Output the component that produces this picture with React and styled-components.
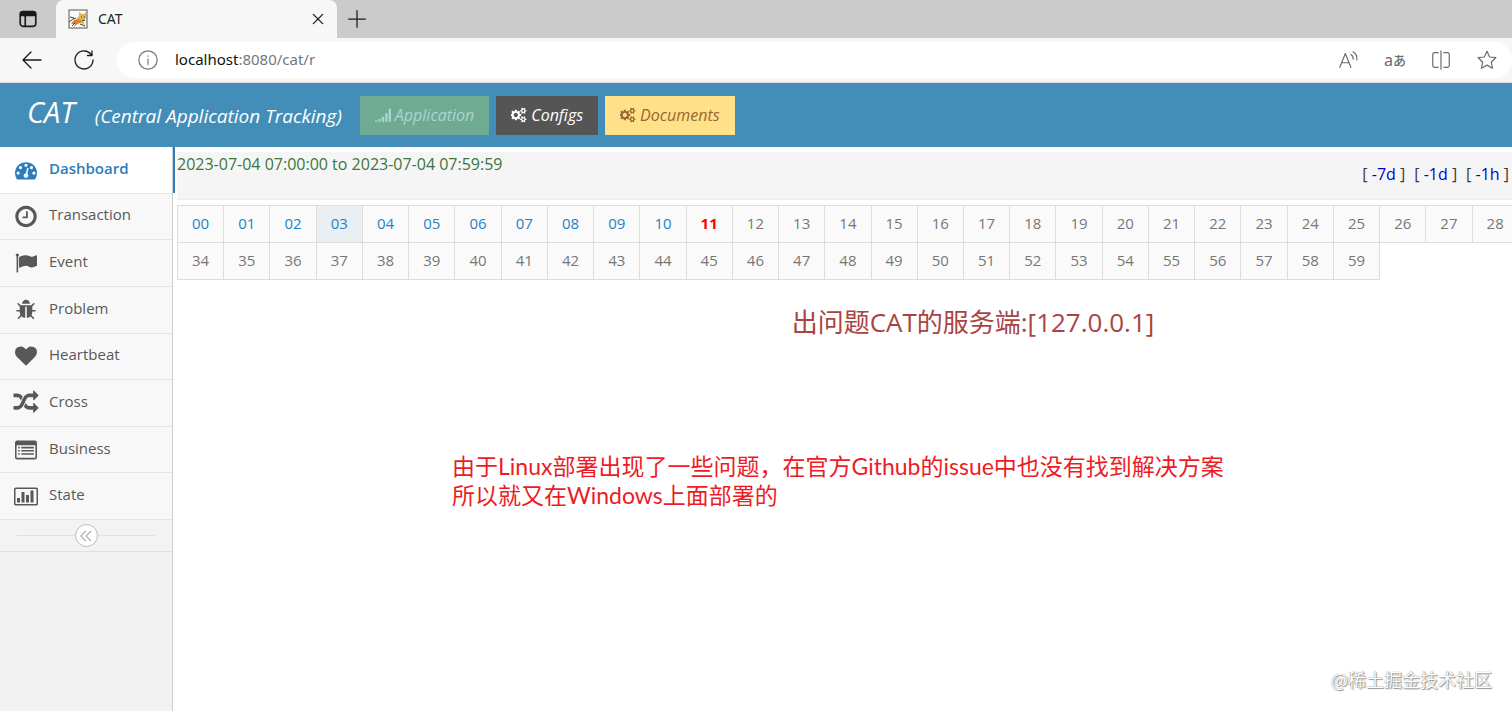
import React from 'react';
import styled, { createGlobalStyle } from 'styled-components';

const GlobalStyle = createGlobalStyle`
  * {
    box-sizing: border-box;
  }
  body {
    margin: 0;
    overflow: hidden;
    background: #ffffff;
    font-family: 'Open Sans', 'Noto Sans CJK SC', sans-serif;
    font-size: 16px;
    color: #393939;
  }
  button {
    font-family: inherit;
    border: 0;
    padding: 0;
    background: none;
    cursor: pointer;
  }
  a {
    text-decoration: none;
  }
`;

const Page = styled.div`
  display: flex;
  flex-direction: column;
  min-height: 100vh;
`;

/* browser window */

const TabStrip = styled.div`
  display: flex;
  align-items: stretch;
  height: 38px;
  background: #cbcbcb;
`;

const StripButton = styled.button`
  display: flex;
  align-items: center;
  justify-content: center;
  width: ${({ $width }) => $width}px;
  color: #1a1a1a;
`;

const Tab = styled.div`
  display: flex;
  align-items: center;
  width: 281px;
  padding: 0 8px 0 12px;
  gap: 10px;
  background: #f7f7f7;
  border-radius: 8px 8px 0 0;
  font-family: 'Noto Sans', sans-serif;
  font-size: 14px;
  line-height: 20px;
  color: #1f1f1f;
`;

const TabTitle = styled.span`
  flex: 1;
`;

const CloseButton = styled.button`
  display: flex;
  padding: 4px;
  color: #1a1a1a;
`;

const Toolbar = styled.div`
  display: flex;
  align-items: center;
  height: 45px;
  padding-left: 20px;
  background: #f7f7f7;
  border-bottom: 1px solid #dcdcdc;
`;

const NavButton = styled.button`
  display: flex;
  width: 24px;
  margin-right: 28px;
  color: #1a1a1a;
`;

const AddressBar = styled.div`
  flex: 1;
  display: flex;
  align-items: center;
  height: 36px;
  margin-left: -7px;
  padding: 0 13px 0 20px;
  gap: 16px;
  border-radius: 18px;
  background: #ffffff;
  color: #767676;
`;

const Url = styled.div`
  flex: 1;
  padding-bottom: 2px;
  font-family: 'Noto Sans', sans-serif;
  font-size: 15px;
  line-height: 24px;
  color: #767676;

  b {
    font-weight: 400;
    color: #111111;
  }
`;

const AddressTools = styled.div`
  display: flex;
  align-items: center;
  gap: 22px;
`;

const ToolButton = styled.button`
  display: flex;
  align-items: center;
  justify-content: center;
  width: 24px;
  height: 24px;
  font-family: 'Noto Sans', 'Noto Sans CJK JP', sans-serif;
  font-size: 16px;
  line-height: 20px;
  color: #6b6b6b;

  small {
    font-size: 13px;
    font-weight: 500;
  }
`;

/* application */

const Navbar = styled.header`
  display: flex;
  align-items: center;
  height: 64px;
  padding-left: 27px;
  background: #438eb9;
  font-style: italic;
  color: #ffffff;
`;

const Brand = styled.div`
  display: flex;
  align-items: baseline;
  gap: 20px;
  margin-right: 18px;
  padding-bottom: 2px;
  font-size: 29px;
  line-height: 36px;
  white-space: nowrap;

  small {
    font-size: 19px;
  }
`;

const NavActions = styled.div`
  display: flex;
  gap: 7px;
`;

const actionColors = {
  success: { bg: '#6eab92', text: '#a9d5d3' },
  dark: { bg: '#555555', text: '#ffffff' },
  yellow: { bg: '#fee188', text: '#996633' },
};

const ActionButton = styled.button`
  display: flex;
  align-items: center;
  gap: 4px;
  height: 39px;
  padding: 0 15px;
  font-size: 16px;
  font-style: italic;
  background: ${({ $tone }) => actionColors[$tone].bg};
  color: ${({ $tone }) => actionColors[$tone].text};
`;

const Body = styled.div`
  flex: 1;
  display: flex;
`;

const Sidebar = styled.aside`
  flex: none;
  width: 173px;
  background: #f2f2f2;
  border-right: 1px solid #cccccc;
`;

const Menu = styled.nav`
  display: grid;
  grid-auto-rows: 1fr;
  height: 373px;
`;

const MenuItem = styled.a`
  position: relative;
  display: flex;
  align-items: center;
  gap: 10px;
  padding-left: 13px;
  border-bottom: 1px solid #e5e5e5;
  background: ${({ $active }) => ($active ? '#ffffff' : '#f8f8f8')};
  color: ${({ $active }) => ($active ? '#2b7dbc' : '#585858')};
  font-weight: ${({ $active }) => ($active ? 600 : 400)};
  font-size: 15px;

  &::after {
    content: '';
    display: ${({ $active }) => ($active ? 'block' : 'none')};
    position: absolute;
    top: 0;
    bottom: 0;
    right: -3px;
    width: 2px;
    background: #2b7dbc;
  }
`;

const MenuLabel = styled.span`
  padding-bottom: 4px;
`;

const Collapse = styled.div`
  display: flex;
  align-items: center;
  height: 32px;
  padding: 0 17px;
  background: #f3f3f3;
  border-bottom: 1px solid #e0e0e0;

  &::before,
  &::after {
    content: '';
    flex: 1;
    border-top: 1px solid #e0e0e0;
  }
`;

const CollapseButton = styled.button`
  display: flex;
  align-items: center;
  justify-content: center;
  width: 23px;
  height: 23px;
  border: 1px solid #bbbbbb;
  border-radius: 50%;
  background: #ffffff;
  color: #999999;
`;

const Main = styled.main`
  flex: 1;
  min-width: 0;
  overflow: hidden;
  padding: 5px 0 0 4px;
`;

const Period = styled.div`
  display: flex;
  justify-content: space-between;
  height: 48px;
  padding-right: 3px;
  background: #f5f5f5;
  border-bottom: 1px solid #eeeeee;
  line-height: 24px;
`;

const PeriodText = styled.span`
  color: #3c763d;
`;

const PeriodLinks = styled.div`
  display: flex;
  gap: 9px;
  padding-top: 10px;

  a {
    color: #0000cc;
  }
`;

const MinuteTable = styled.table`
  width: 1573px;
  margin-top: 5px;
  table-layout: fixed;
  border-collapse: collapse;
`;

const MinuteCell = styled.td`
  height: 37px;
  padding: 0 0 2px;
  border: 1px solid #dddddd;
  text-align: center;
  font-size: 15px;
  background: ${({ $hover }) => ($hover ? '#e9eff3' : '#fafafa')};
`;

const MinuteLink = styled.a`
  color: ${({ $tone }) => ({ past: '#2283c5', now: '#ff0000', later: '#777777' })[$tone]};
  font-weight: ${({ $tone }) => ($tone === 'now' ? 700 : 400)};
`;

const ServerError = styled.h3`
  margin: 22px 0 0;
  padding-left: 257px;
  font-size: 26px;
  font-weight: 400;
  line-height: 40px;
  text-align: center;
  color: #a94442;
`;

const Note = styled.p`
  margin: 110px 0 0 275px;
  font-family: Lato, 'Noto Sans CJK SC', sans-serif;
  font-size: 23px;
  line-height: 29px;
  color: #ed1c24;
`;

const Watermark = styled.div`
  position: absolute;
  right: 20px;
  bottom: 19px;
  font-family: 'Noto Sans CJK SC', sans-serif;
  font-size: 18px;
  line-height: 26px;
  color: #ffffff;
  text-shadow: 0 0 1px #666666, 1px 1px 1px #999999;
`;

const glyphs = {
  dashboard: {
    width: 1792,
    d: 'M384 1152q0-53-37.5-90.5t-90.5-37.5-90.5 37.5-37.5 90.5 37.5 90.5 90.5 37.5 90.5-37.5 37.5-90.5zm192-448q0-53-37.5-90.5t-90.5-37.5-90.5 37.5-37.5 90.5 37.5 90.5 90.5 37.5 90.5-37.5 37.5-90.5zm428 481l101-382q6-26-7.5-48.5t-38.5-29.5-48 6.5-30 39.5l-101 382q-60 5-107 43.5t-63 98.5q-20 77 20 146t117 89 146-20 89-117q16-60-6-117t-72-91zm660-33q0-53-37.5-90.5t-90.5-37.5-90.5 37.5-37.5 90.5 37.5 90.5 90.5 37.5 90.5-37.5 37.5-90.5zm-640-640q0-53-37.5-90.5t-90.5-37.5-90.5 37.5-37.5 90.5 37.5 90.5 90.5 37.5 90.5-37.5 37.5-90.5zm448 192q0-53-37.5-90.5t-90.5-37.5-90.5 37.5-37.5 90.5 37.5 90.5 90.5 37.5 90.5-37.5 37.5-90.5zm320 448q0 261-141 483-19 29-54 29h-1402q-35 0-54-29-141-221-141-483 0-182 71-348t191-286 286-191 348-71 348 71 286 191 191 286 71 348z',
  },
  clock: {
    width: 1792,
    d: 'M1024 544v448q0 14-9 23t-23 9h-320q-14 0-23-9t-9-23v-64q0-14 9-23t23-9h224v-352q0-14 9-23t23-9h64q14 0 23 9t9 23zm416 352q0-148-73-273t-198-198-273-73-273 73-198 198-73 273 73 273 198 198 273 73 273-73 198-198 73-273zm224 0q0 209-103 385.5t-279.5 279.5-385.5 103-385.5-103-279.5-279.5-103-385.5 103-385.5 279.5-279.5 385.5-103 385.5 103 279.5 279.5 103 385.5z',
  },
  flag: {
    width: 1792,
    d: 'M320 256q0 72-64 110v1266q0 13-9.5 22.5t-22.5 9.5h-64q-13 0-22.5-9.5t-9.5-22.5v-1266q-64-38-64-110 0-53 37.5-90.5t90.5-37.5 90.5 37.5 37.5 90.5zm1472 64v763q0 25-12.5 38.5t-39.5 27.5q-215 116-369 116-61 0-123.5-22t-108.5-48-115.5-48-142.5-22q-192 0-464 146-17 9-33 9-26 0-45-19t-19-45v-742q0-32 31-55 21-14 79-43 236-120 421-120 107 0 200 29t219 88q38 19 88 19 54 0 117.5-21t110-47 88-47 54.5-21q26 0 45 19t19 45z',
  },
  bug: {
    width: 1792,
    d: 'M1696 960q0 26-19 45t-45 19h-224q0 171-67 290l208 209q19 19 19 45t-19 45q-18 19-45 19t-45-19l-198-197q-5 5-15 13t-42 28.5-65 36.5-82 29-97 13v-896h-128v896q-51 0-101.5-13.5t-87-33-66-39-43.5-32.5l-15-14-183 207q-20 21-48 21-24 0-43-16-19-18-20.5-44.5t15.5-46.5l202-227q-58-114-58-274h-224q-26 0-45-19t-19-45 19-45 45-19h224v-294l-173-173q-19-19-19-45t19-45 45-19 45 19l173 173h844l173-173q19-19 45-19t45 19 19 45-19 45l-173 173v294h224q26 0 45 19t19 45zm-480-576h-640q0-133 93.5-226.5t226.5-93.5 226.5 93.5 93.5 226.5z',
  },
  heart: {
    width: 1792,
    d: 'M896 1664q-26 0-44-18l-624-602q-10-8-27.5-26t-55.5-65.5-68-97.5-53.5-121-23.5-138q0-220 127-344t351-124q62 0 126.5 21.5t120 58 95.5 68.5 76 68q36-36 76-68t95.5-68.5 120-58 126.5-21.5q224 0 351 124t127 344q0 221-229 450l-623 600q-18 18-44 18z',
  },
  random: {
    width: 1792,
    d: 'M666 481q-60 92-137 273-22-45-37-72.5t-40.5-63.5-51-56.5-63-35-81.5-14.5h-224q-14 0-23-9t-9-23v-192q0-14 9-23t23-9h224q250 0 410 225zm1126 799q0 14-9 23l-320 320q-9 9-23 9-13 0-22.5-9.5t-9.5-22.5v-192q-32 0-85 .5t-81 1-73-1-71-5-64-10.5-63-18.5-58-28.5-59-40-55-53.5-56-69.5q59-93 136-273 22 45 37 72.5t40.5 63.5 51 56.5 63 35 81.5 14.5h256v-192q0-14 9-23t23-9q12 0 24 10l319 319q9 9 9 23zm0-896q0 14-9 23l-320 320q-9 9-23 9-13 0-22.5-9.5t-9.5-22.5v-192h-256q-48 0-87 15t-69 45-51 61.5-45 77.5q-32 62-78 171-29 66-49.5 111t-54 105-64 100-74 83-90 68.5-106.5 42-128 16.5h-224q-14 0-23-9t-9-23v-192q0-14 9-23t23-9h224q48 0 87-15t69-45 51-61.5 45-77.5q32-62 78-171 29-66 49.5-111t54-105 64-100 74-83 90-68.5 106.5-42 128-16.5h256v-192q0-14 9-23t23-9q12 0 24 10l319 319q9 9 9 23z',
  },
  list: {
    width: 1792,
    d: 'M160 128h1472q66 0 113 47t47 113v1216q0 66-47 113t-113 47h-1472q-66 0-113-47t-47-113v-1216q0-66 47-113t113-47zM160 512q-32 0-32 32v960q0 32 32 32h1472q32 0 32-32v-960q0-32-32-32zM256 640h128v128h-128zM512 640h1024v128h-1024zM256 896h128v128h-128zM512 896h1024v128h-1024zM256 1152h128v128h-128zM512 1152h1024v128h-1024z',
  },
  chart: {
    width: 2048,
    d: 'M160 128h1728q66 0 113 47t47 113v1216q0 66-47 113t-113 47h-1728q-66 0-113-47t-47-113v-1216q0-66 47-113t113-47zM160 256q-32 0-32 32v1216q0 32 32 32h1728q32 0 32-32v-1216q0-32-32-32zM256 1024h256v384h-256zM640 512h256v896h-256zM1024 768h256v640h-256zM1408 384h256v1024h-256z',
  },
  signal: {
    width: 1792,
    d: 'M0 1472h256v192h-256zM384 1344h256v320h-256zM768 1088h256v576h-256zM1152 704h256v960h-256zM1536 192h256v1472h-256z',
  },
  cogs: {
    width: 1920,
    d: 'M832 896q0-106-75-181t-181-75-181 75-75 181 75 181 181 75 181-75 75-181zm768 512q0-52-38-90t-90-38-90 38-38 90q0 53 37.5 90.5t90.5 37.5 90.5-37.5 37.5-90.5zm0-1024q0-52-38-90t-90-38-90 38-38 90q0 53 37.5 90.5t90.5 37.5 90.5-37.5 37.5-90.5zm-384 421v185q0 10-7 19.5t-16 10.5l-155 24q-11 35-32 76 34 48 90 115 7 11 7 20 0 12-7 19-23 30-82.5 89.5t-78.5 59.5q-11 0-21-7l-115-90q-37 19-77 31-11 108-23 155-7 24-30 24h-186q-11 0-20-7.5t-10-17.5l-23-153q-34-10-75-31l-118 89q-7 7-20 7-11 0-21-8-144-133-144-160 0-9 7-19 10-14 41-53t47-61q-23-44-35-82l-152-24q-10-1-17-9.5t-7-19.5v-185q0-10 7-19.5t16-10.5l155-24q11-35 32-76-34-48-90-115-7-11-7-20 0-12 7-20 22-30 82-89t79-59q11 0 21 7l115 90q34-18 77-32 11-108 23-154 7-24 30-24h186q11 0 20 7.5t10 17.5l23 153q34 10 75 31l118-89q8-7 20-7 11 0 21 8 144 133 144 160 0 8-7 19-12 16-42 54t-45 60q23 48 34 82l152 23q10 2 17 10.5t7 19.5zm640 533v140q0 16-149 31-12 27-30 52 51 113 51 138 0 4-4 7-122 71-124 71-8 0-46-47t-52-68q-20 2-30 2t-30-2q-14 21-52 68t-46 47q-2 0-124-71-4-3-4-7 0-25 51-138-18-25-30-52-149-15-149-31v-140q0-16 149-31 13-29 30-52-51-113-51-138 0-4 4-7 4-2 35-20t59-34 30-16q8 0 46 46.5t52 67.5q20-2 30-2t30 2q51-71 92-112l6-2q4 0 124 70 4 3 4 7 0 25-51 138 17 23 30 52 149 15 149 31zm0-1024v140q0 16-149 31-12 27-30 52 51 113 51 138 0 4-4 7-122 71-124 71-8 0-46-47t-52-68q-20 2-30 2t-30-2q-14 21-52 68t-46 47q-2 0-124-71-4-3-4-7 0-25 51-138-18-25-30-52-149-15-149-31v-140q0-16 149-31 13-29 30-52-51-113-51-138 0-4 4-7 4-2 35-20t59-34 30-16q8 0 46 46.5t52 67.5q20-2 30-2t30 2q51-71 92-112l6-2q4 0 124 70 4 3 4 7 0 25-51 138 17 23 30 52 149 15 149 31z',
  },
};

const Glyph = ({ name, size, width = size }) => (
  <svg width={width} height={size} viewBox={`0 0 ${glyphs[name].width} 1792`} fill="currentColor" fillRule="evenodd" aria-hidden="true">
    <path d={glyphs[name].d} />
  </svg>
);

const Line = ({ size, children, stroke = 1.3 }) => (
  <svg width={size} height={size} viewBox="0 0 24 24" fill="none" stroke="currentColor" strokeWidth={stroke} strokeLinecap="round" strokeLinejoin="round" aria-hidden="true">
    {children}
  </svg>
);

const Favicon = () => (
  <svg width="20" height="20" viewBox="0 0 20 20" aria-hidden="true">
    <rect x="1" y="1" width="18" height="18" fill="#fbfaf3" stroke="#555555" />
    <path d="M9 9l2-2V3l3 2h2l2-2v6l-3 3 2 4-4-2-3-1z" fill="#d6bb55" />
    <path d="M3 15l3-4 4-1 4 2-2 2-3 1-3 3 1-3z" fill="#d9803a" />
    <path d="M1 13l4-3 3-1M2 8l4 1M13 8h1M16 8h1M4 17l3-3M12 15l5 2M14 12l3-1" stroke="#4a4030" fill="none" />
  </svg>
);

const menu = [
  { label: 'Dashboard', icon: 'dashboard', active: true },
  { label: 'Transaction', icon: 'clock', size: 25 },
  { label: 'Event', icon: 'flag' },
  { label: 'Problem', icon: 'bug' },
  { label: 'Heartbeat', icon: 'heart' },
  { label: 'Cross', icon: 'random', size: 25 },
  { label: 'Business', icon: 'list' },
  { label: 'State', icon: 'chart', size: 21 },
];

const minutes = Array.from({ length: 60 }, (_, i) => i);
const rows = [minutes.slice(0, 34), minutes.slice(34)];
const currentMinute = 11;
const hoveredMinute = 3;

const minuteTone = (minute) => {
  if (minute === currentMinute) return 'now';
  return minute < currentMinute ? 'past' : 'later';
};

const BrowserChrome = () => (
  <>
    <TabStrip>
      <StripButton $width={56} aria-label="Tab actions">
        <Line size={22} stroke={1.8}>
          <rect x="3.5" y="4" width="17" height="16" rx="3" />
          <path d="M4 5h16v3H4z" fill="currentColor" />
          <path d="M9 9v11" />
        </Line>
      </StripButton>
      <Tab>
        <Favicon />
        <TabTitle>CAT</TabTitle>
        <CloseButton aria-label="Close tab">
          <Line size={14} stroke={2.2}>
            <path d="M4 4l16 16M20 4L4 20" />
          </Line>
        </CloseButton>
      </Tab>
      <StripButton $width={40} aria-label="New tab">
        <Line size={20} stroke={1.5}>
          <path d="M12 2v20M2 12h20" />
        </Line>
      </StripButton>
    </TabStrip>
    <Toolbar>
      <NavButton aria-label="Back">
        <Line size={24}>
          <path d="M21 12H3M11 4l-8 8 8 8" />
        </Line>
      </NavButton>
      <NavButton aria-label="Refresh">
        <Line size={24}>
          <path d="M19.500 7A9 9 0 1 0 21 12M20 3v4.500h-4.500" />
        </Line>
      </NavButton>
      <AddressBar>
        <Line size={22}>
          <circle cx="12" cy="12" r="10" />
          <path d="M12 11v6M12 7.500v.5" />
        </Line>
        <Url>
          <b>localhost</b>:8080/cat/r
        </Url>
        <AddressTools>
          <ToolButton aria-label="Read aloud">
            <Line size={22}>
              <path d="M2 20L8 5l6 15M4.500 15h7M14 6q3 2 2.500 5M16.500 3q5 3 4 9" />
            </Line>
          </ToolButton>
          <ToolButton aria-label="Translate">
            a<small>あ</small>
          </ToolButton>
          <ToolButton aria-label="Split screen">
            <Line size={22}>
              <path d="M9 4H5a2 2 0 0 0-2 2v12a2 2 0 0 0 2 2h4M15 4h4a2 2 0 0 1 2 2v12a2 2 0 0 1-2 2h-4M12 2v20" />
            </Line>
          </ToolButton>
          <ToolButton aria-label="Add to favorites">
            <Line size={22}>
              <path d="M12 2.500l2.900 6.200 6.800.8-5 4.700 1.300 6.800-6-3.400L6 21l1.300-6.800-5-4.700 6.800-.8z" />
            </Line>
          </ToolButton>
        </AddressTools>
      </AddressBar>
    </Toolbar>
  </>
);

const App = () => {
  return (
    <Page>
      <GlobalStyle />
      <BrowserChrome />
      <Navbar>
        <Brand>
          CAT <small>(Central Application Tracking)</small>
        </Brand>
        <NavActions>
          <ActionButton $tone="success">
            <Glyph name="signal" size={16} />
            Application
          </ActionButton>
          <ActionButton $tone="dark">
            <Glyph name="cogs" size={16} />
            Configs
          </ActionButton>
          <ActionButton $tone="yellow">
            <Glyph name="cogs" size={16} />
            Documents
          </ActionButton>
        </NavActions>
      </Navbar>
      <Body>
        <Sidebar>
          <Menu>
            {menu.map((item) => (
              <MenuItem key={item.label} href="#" $active={item.active}>
                <Glyph name={item.icon} size={item.size || 22} width={26} />
                <MenuLabel>{item.label}</MenuLabel>
              </MenuItem>
            ))}
          </Menu>
          <Collapse>
            <CollapseButton aria-label="Collapse sidebar">
              <Line size={14} stroke={1.8}>
                <path d="M11 4l-8 8 8 8M20 4l-8 8 8 8" />
              </Line>
            </CollapseButton>
          </Collapse>
        </Sidebar>
        <Main>
          <Period>
            <PeriodText>2023-07-04 07:00:00 to 2023-07-04 07:59:59</PeriodText>
            <PeriodLinks>
              {['-7d', '-1d', '-1h'].map((step) => (
                <span key={step}>
                  [ <a href="#">{step}</a> ]
                </span>
              ))}
            </PeriodLinks>
          </Period>
          <MinuteTable>
            <tbody>
              {rows.map((row) => (
                <tr key={row[0]}>
                  {row.map((minute) => (
                    <MinuteCell key={minute} $hover={minute === hoveredMinute}>
                      <MinuteLink href="#" $tone={minuteTone(minute)}>
                        {String(minute).padStart(2, '0')}
                      </MinuteLink>
                    </MinuteCell>
                  ))}
                </tr>
              ))}
            </tbody>
          </MinuteTable>
          <ServerError>出问题CAT的服务端:[127.0.0.1]</ServerError>
          <Note>
            由于Linux部署出现了一些问题，在官方Github的issue中也没有找到解决方案
            <br />
            所以就又在Windows上面部署的
          </Note>
        </Main>
      </Body>
      <Watermark>@稀土掘金技术社区</Watermark>
    </Page>
  );
};

export default App;
